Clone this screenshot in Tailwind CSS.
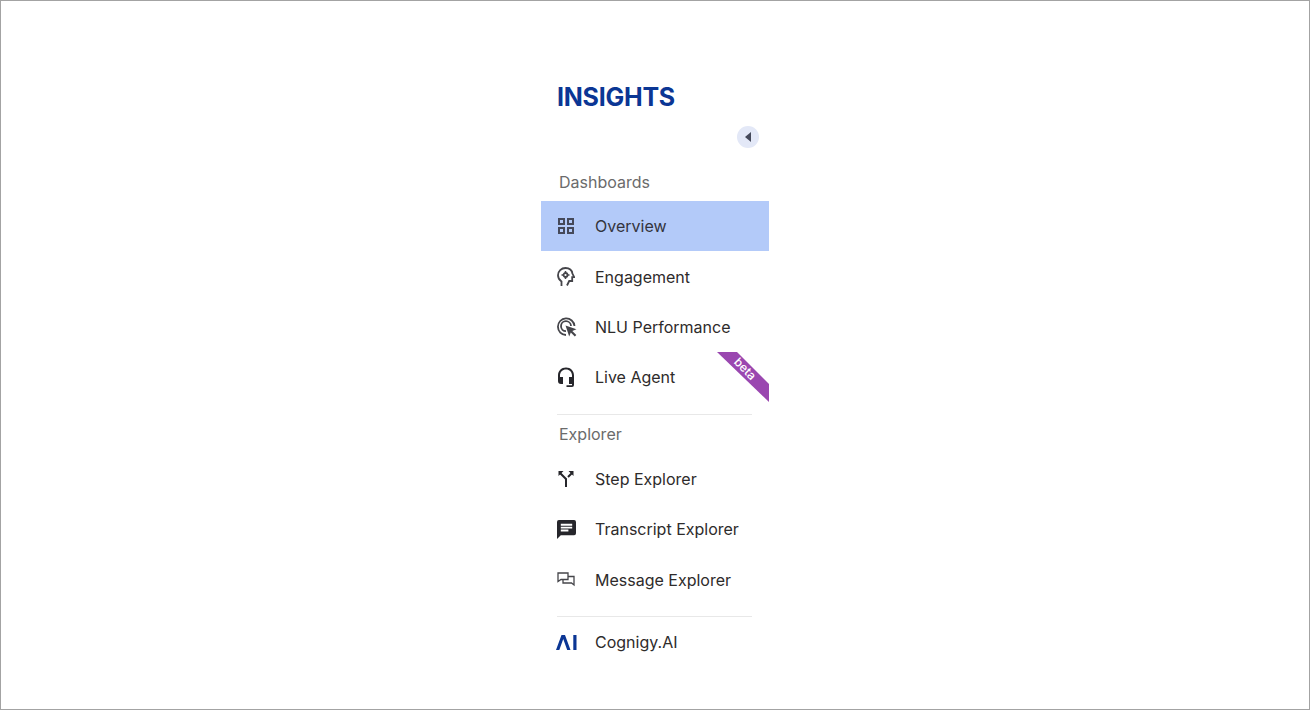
<!DOCTYPE html>
<html>
<head>
<meta charset="UTF-8">
<script src="https://cdn.jsdelivr.net/npm/@tailwindcss/browser@4"></script>
</head>
<body>
<div class="h-[710px] w-[1310px] overflow-hidden border border-[#a3a3a3] bg-white font-['Inter',sans-serif]">
  <nav class="mx-auto w-[228px] pt-[79px]">
    <h1 class="pl-4 text-[25px] font-bold leading-[34px] tracking-[-0.25px] text-[#0b3694]">INSIGHTS</h1>
    <div class="mt-[12px] flex justify-end pr-[10px]">
      <button class="flex h-[22px] w-[22px] items-center justify-center rounded-full bg-[#e3e8f7]">
        <svg width="6" height="10" viewBox="0 0 6 10"><path d="M6 0v10L0 5z" fill="#45495a"/></svg>
      </button>
    </div>
    <p class="mt-[24px] h-[20px] pl-[18px] text-[16px] leading-[20px] text-[#6b6b6b]">Dashboards</p>
    <ul class="mt-[9px]">
      <li class="flex h-[50px] items-center gap-[20px] bg-[#b3caf9] pl-4 text-[16px] text-[#33343d]">
        <svg class="shrink-0" width="18" height="18" viewBox="0 0 18 18" fill="none" stroke="#45495a" stroke-width="2"><rect x="2" y="2" width="5" height="5"/><rect x="11" y="2" width="5" height="5"/><rect x="2" y="11" width="5" height="5"/><rect x="11" y="11" width="5" height="5"/></svg>
        <span>Overview</span>
      </li>
      <li class="mt-px flex h-[50px] items-center gap-[20px] pl-4 text-[16px] text-[#2e2b2b]">
        <svg class="shrink-0" width="18" height="20" viewBox="0 0 18 20" fill="none" stroke="#45454a" stroke-width="1.800"><path d="M4.500 19v-4.500C2.300 13 1 10.800 1 8.300 1 4.200 4.300 1 8.500 1c3.800 0 6.500 2.500 7 5.800l1.700 3.400h-2V14h-3L10 18.500"/><circle cx="8.500" cy="8" r="2"/><path d="M8.500 4v2M8.500 10v2M4.500 8h2M10.500 8h2" stroke-width="1.500"/></svg>
        <span>Engagement</span>
      </li>
      <li class="flex h-[50px] items-center gap-[20px] pl-4 text-[16px] text-[#2e2b2b]">
        <svg class="shrink-0" width="20" height="20" viewBox="0 0 20 20" fill="none" stroke="#45454a" stroke-width="1.800"><path d="M9 18A8.300 8.300 0 1 1 17.500 9"/><path d="M9 14.200A5 5 0 1 1 14 9"/><path d="M8.500 8.500l11 3.800-4.200 1.600 4 4-1.500 1.500-4-4-1.600 4.200z" fill="#45454a" stroke="none"/></svg>
        <span class="-ml-[2px]">NLU Performance</span>
      </li>
      <li class="relative flex h-[50px] items-center gap-[20px] overflow-hidden pl-4 text-[16px] text-[#2e2b2b]">
        <svg class="shrink-0" width="18" height="20" viewBox="0 0 18 20"><path d="M9 0.500C4.300 0.500 1 4 1 8.500V14a3 3 0 0 0 3 3h2V10H3V8.500C3 5.100 5.500 2.500 9 2.500s6 2.600 6 6V10h-3v7h3v1.200H9.500V20H15a2 2 0 0 0 2-2V8.500C17 4 13.700 0.500 9 0.500z" fill="#26262b"/></svg>
        <span>Live Agent</span>
        <div class="absolute right-0 top-0 h-[50px] w-[52px]">
          <svg class="absolute inset-0" width="52" height="50" viewBox="0 0 52 50"><path d="M0 0h20l32 32v18z" fill="#9a47b0"/></svg>
          <span class="absolute left-[15px] top-[10px] w-[26px] rotate-45 text-center text-[12px] font-medium leading-[14px] text-white">beta</span>
        </div>
      </li>
    </ul>
    <div class="mx-4 mt-[12px] h-px w-[195px] bg-[#e8e8e8]"></div>
    <p class="mt-[9px] h-[20px] pl-[18px] text-[16px] leading-[20px] text-[#6b6b6b]">Explorer</p>
    <ul class="mt-[10px]">
      <li class="flex h-[50px] items-center gap-[20px] pl-4 text-[16px] text-[#2e2b2b]">
        <svg class="shrink-0" width="18" height="18" viewBox="0 0 18 18" fill="none" stroke="#26262b" stroke-width="2"><path d="M3 3l6 6v8M15 3l-4 4"/><path d="M1.500 1h5l-5 5zM16.500 1h-5l5 5z" fill="#26262b" stroke="none"/></svg>
        <span>Step Explorer</span>
      </li>
      <li class="flex h-[50px] items-center gap-[20px] pl-4 text-[16px] text-[#2e2b2b]">
        <svg class="-mr-px shrink-0" width="19" height="19" viewBox="0 0 20 20"><path d="M2 0h16a2 2 0 0 1 2 2v12a2 2 0 0 1-2 2H4l-4 4V2a2 2 0 0 1 2-2z" fill="#26262b"/><path d="M4 4h12v2H4zM4 7h12v2H4zM4 10h8v2H4z" fill="#fff"/></svg>
        <span>Transcript Explorer</span>
      </li>
      <li class="mt-px flex h-[50px] items-center gap-[20px] pl-4 text-[16px] text-[#2e2b2b]">
        <svg class="shrink-0" width="18" height="16" viewBox="0 0 18 16" fill="none" stroke="#45454a" stroke-width="1.300"><path d="M1 1h10v6.500H4L1 9.500z"/><path d="M6 7.500V11h8.500l2.500 2V4.500h-6"/></svg>
        <span>Message Explorer</span>
      </li>
    </ul>
    <div class="mx-4 mt-[11px] h-px w-[195px] bg-[#e8e8e8]"></div>
    <div class="flex h-[50px] items-center gap-[18px] pl-[15px] text-[16px] text-[#2e2b2b]">
      <svg class="shrink-0" width="21" height="15" viewBox="0 0 21 15" fill="#0b3694"><path d="M0 15 5.500 0h3.500L14.500 15h-3.300L7.250 4 3.300 15z"/><rect x="17.300" y="0" width="3.200" height="15"/></svg>
      <span>Cognigy.AI</span>
    </div>
  </nav>
</div>
</body>
</html>
